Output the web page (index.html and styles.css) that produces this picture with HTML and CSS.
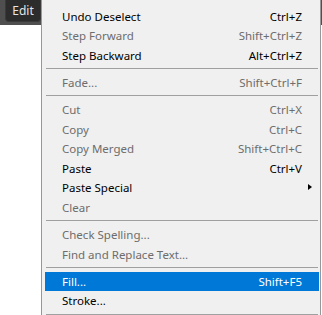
FILE: index.html
```html
<!DOCTYPE html>
<html lang="en">
<head>
<meta charset="utf-8">
<title>Edit menu</title>
<link rel="stylesheet" href="styles.css">
</head>
<body>
<div class="topbar">
  <button class="menu-title">Edit</button>
</div>
<div class="menu">
  <div class="item"><span class="label">Undo Deselect</span><span class="key">Ctrl+Z</span></div>
  <div class="item disabled"><span class="label">Step Forward</span><span class="key">Shift+Ctrl+Z</span></div>
  <div class="item"><span class="label">Step Backward</span><span class="key">Alt+Ctrl+Z</span></div>
  <div class="sep"></div>
  <div class="item disabled"><span class="label">Fade...</span><span class="key">Shift+Ctrl+F</span></div>
  <div class="sep"></div>
  <div class="item disabled"><span class="label">Cut</span><span class="key">Ctrl+X</span></div>
  <div class="item disabled"><span class="label">Copy</span><span class="key">Ctrl+C</span></div>
  <div class="item disabled"><span class="label">Copy Merged</span><span class="key">Shift+Ctrl+C</span></div>
  <div class="item"><span class="label">Paste</span><span class="key">Ctrl+V</span></div>
  <div class="item submenu"><span class="label">Paste Special</span><span class="arrow"></span></div>
  <div class="item disabled"><span class="label">Clear</span></div>
  <div class="sep"></div>
  <div class="item disabled"><span class="label">Check Spelling...</span></div>
  <div class="item disabled"><span class="label">Find and Replace Text...</span></div>
  <div class="sep"></div>
  <div class="item active"><span class="label">Fill...</span><span class="key">Shift+F5</span></div>
  <div class="item"><span class="label">Stroke...</span></div>
  <div class="sep"></div>
</div>
</body>
</html>
```

FILE: styles.css
```css
html, body {
  margin: 0;
  padding: 0;
  overflow: hidden;
  background: #ffffff;
  font-family: "Segoe UI", "Noto Sans", "Open Sans", sans-serif;
  font-size: 11.5px;
}

.topbar {
  height: 25px;
  background: #4f4f4f;
  display: flex;
  align-items: flex-start;
  padding-left: 5px;
}

.menu-title {
  width: 36px;
  height: 22px;
  margin: 0;
  padding: 0;
  border: 1px solid #3a3a3a;
  border-top: none;
  border-radius: 0 0 4px 4px;
  background: #2c2c2c;
  color: #e6e6e6;
  font-family: inherit;
  font-size: 12px;
  line-height: 20px;
  text-align: center;
}

.menu {
  position: absolute;
  left: 41px;
  top: 0;
  width: 274px;
  padding: 6.5px 1px 20px 3px;
  background: #f0f0f0;
  border: 1px solid #979797;
  border-top: none;
}

.item {
  position: relative;
  display: flex;
  justify-content: space-between;
  align-items: center;
  height: 19.5px;
  padding: 0 17px;
  color: #000000;
  white-space: nowrap;
}

.item.disabled {
  color: #6d6d6d;
}

.item.active {
  background: #0078d7;
  color: #ffffff;
}

.arrow {
  position: absolute;
  right: 7px;
  top: 6px;
  width: 0;
  height: 0;
  border-top: 3.5px solid transparent;
  border-bottom: 3.5px solid transparent;
  border-left: 4px solid #000000;
}

.sep {
  height: 1px;
  margin: 3px 1px 3.8px 1px;
  background: #a0a0a0;
}
```
